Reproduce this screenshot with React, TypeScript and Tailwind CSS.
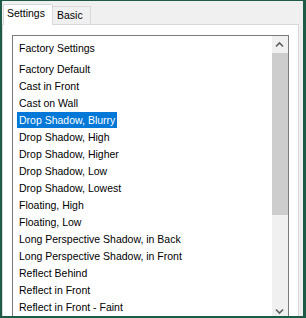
import React from 'react';

const presets = [
  'Factory Default',
  'Cast in Front',
  'Cast on Wall',
  'Drop Shadow, Blurry',
  'Drop Shadow, High',
  'Drop Shadow, Higher',
  'Drop Shadow, Low',
  'Drop Shadow, Lowest',
  'Floating, High',
  'Floating, Low',
  'Long Perspective Shadow, in Back',
  'Long Perspective Shadow, in Front',
  'Reflect Behind',
  'Reflect in Front',
  'Reflect in Front - Faint',
];

const selected = 'Drop Shadow, Blurry';

const Chevron: React.FC<{ dir: 'up' | 'down' }> = ({ dir }) => (
  <svg width="16" height="17" viewBox="0 0 16 17" className="block">
    <polyline
      points={dir === 'up' ? '4,10.5 7.5,7 11,10.5' : '4,6.5 7.5,10 11,6.5'}
      fill="none"
      stroke="#606060"
      strokeWidth="1.6"
    />
  </svg>
);

export default function App() {
  return (
    <div className="w-[306px] h-[318px] overflow-hidden bg-[#1d5b47] pl-[2px] pt-[1px] pr-[3px] pb-[2px] font-['Liberation_Sans',Arial,sans-serif] text-[10.5px] text-black">
      <div className="h-full bg-[#f0f0f0] overflow-hidden flex flex-col">
        {/* tabs */}
        <div className="h-[23px] shrink-0 flex items-end pl-[1px]">
          <div className="relative z-10 -mb-px h-[21px] w-[50px] border border-b-0 border-[#d9d9d9] bg-white pl-[3px] pt-[2px] leading-[13px]">
            Settings
          </div>
          <div className="h-[18px] w-[38px] border-t border-r border-[#d9d9d9] bg-[#f0f0f0] pl-[4px] pt-[2px] leading-[13px]">
            Basic
          </div>
        </div>

        {/* tab page */}
        <div className="flex-1 mr-[4px] border-l border-t border-r border-[#d9d9d9] bg-white pl-[9px] pt-[10px]">
          <div className="w-[277px] h-[286px] border border-[#7a7a7a] bg-white flex">
            <div className="flex-1 pt-[4px] pl-[4px] leading-[17px]">
              <div className="h-[17px] mb-[4px]">
                <span className="px-[2px]">Factory Settings</span>
              </div>
              {presets.map((p) => (
                <div key={p} className="h-[17px]">
                  {p === selected ? (
                    <span className="inline-block h-[16px] px-[2px] bg-[#0078d7] text-white">{p}</span>
                  ) : (
                    <span className="px-[2px]">{p}</span>
                  )}
                </div>
              ))}
            </div>

            {/* scrollbar */}
            <div className="w-[16px] bg-[#f0f0f0] flex flex-col">
              <Chevron dir="up" />
              <div className="h-[162px] bg-[#cdcdcd]" />
              <div className="flex-1" />
              <Chevron dir="down" />
            </div>
          </div>
        </div>
      </div>
    </div>
  );
}
